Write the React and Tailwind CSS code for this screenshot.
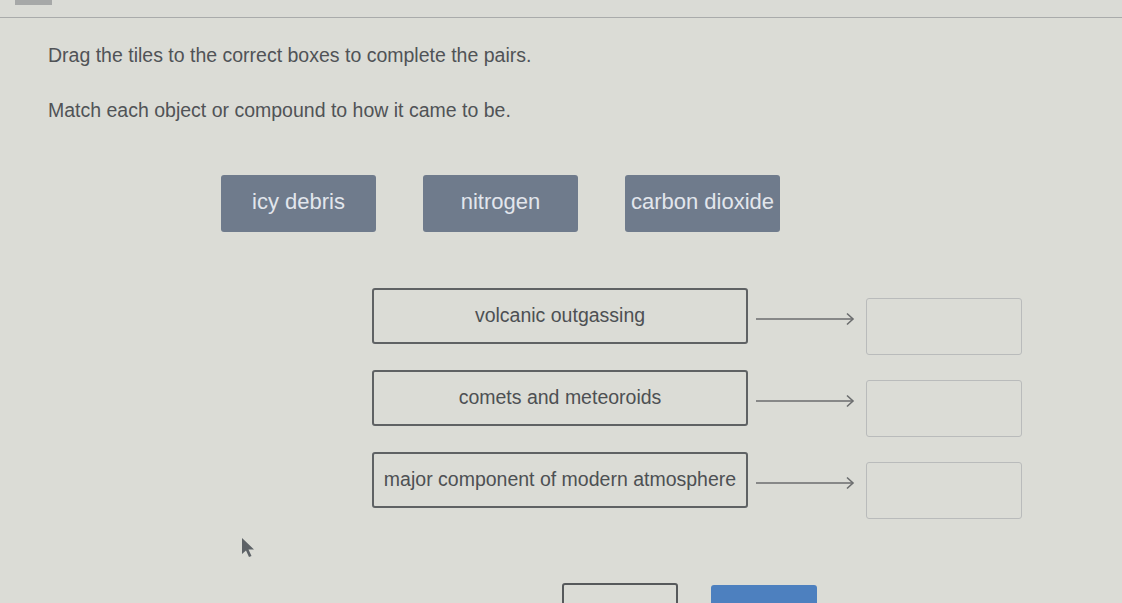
import React from "react";

const tiles = ["icy debris", "nitrogen", "carbon dioxide"];
const rows = [
  "volcanic outgassing",
  "comets and meteoroids",
  "major component of modern atmosphere",
];

function Arrow() {
  return (
    <svg width="100" height="14" viewBox="0 0 100 14" className="shrink-0">
      <line x1="0" y1="7" x2="97" y2="7" stroke="#6b6d6e" strokeWidth="1.6" />
      <polyline points="91,1.5 97,7 91,12.5" fill="none" stroke="#6b6d6e" strokeWidth="1.6" />
    </svg>
  );
}

function Cursor() {
  return (
    <svg width="18" height="24" viewBox="0 0 18 24">
      <path d="M2 1 L2 17 L6 13.5 L9 20 L11.5 19 L8.5 12.5 L14 12.5 Z" fill="#5d6266" />
    </svg>
  );
}

export default function App() {
  return (
    <div
      className="relative w-[1122px] h-[603px] overflow-hidden bg-[#dbdcd6] text-[#505356]"
      style={{ fontFamily: '"Liberation Sans", Arial, sans-serif' }}
    >
      {/* top strip with tab and divider */}
      <div className="h-[18px] border-b border-[#a9abab] bg-[#dadbd6]">
        <div className="ml-[15px] w-[37px] h-[5px] bg-[#a6a8a8]" />
      </div>

      <div className="pl-[48px] pt-[25px] text-[19.5px] leading-[24px]">
        <p>Drag the tiles to the correct boxes to complete the pairs.</p>
        <p className="mt-[31px]">Match each object or compound to how it came to be.</p>
      </div>

      {/* draggable tiles */}
      <div className="flex gap-[47px] pl-[221px] mt-[53px]">
        {tiles.map((t) => (
          <div
            key={t}
            className="w-[155px] h-[57px] pb-[4px] rounded-[3px] bg-[#6f7b8c] text-[#e2e6ec] text-[22px] flex items-center justify-center"
          >
            {t}
          </div>
        ))}
      </div>

      {/* pairs */}
      <div className="flex flex-col gap-[15px] pl-[372px] mt-[56px]">
        {rows.map((r) => (
          <div key={r} className="flex items-start">
            <div className="w-[376px] h-[56px] rounded-[3px] border-2 border-[#5f6264] flex items-center justify-center text-[19.5px] text-[#4d5053] whitespace-nowrap">
              {r}
            </div>
            <div className="ml-[8px] mt-[24px]">
              <Arrow />
            </div>
            <div className="ml-[10px] mt-[10px] w-[156px] h-[57px] rounded-[3px] border border-[#b9bbbb]" />
          </div>
        ))}
      </div>

      {/* bottom buttons */}
      <div className="flex gap-[33px] pl-[562px] mt-[64px]">
        <div className="w-[116px] h-[40px] rounded-[3px] border-2 border-[#56595b]" />
        <div className="mt-[2px] w-[106px] h-[40px] rounded-[3px] bg-[#4d80bf]" />
      </div>

      <div className="absolute left-[240px] top-[537px]">
        <Cursor />
      </div>
    </div>
  );
}
